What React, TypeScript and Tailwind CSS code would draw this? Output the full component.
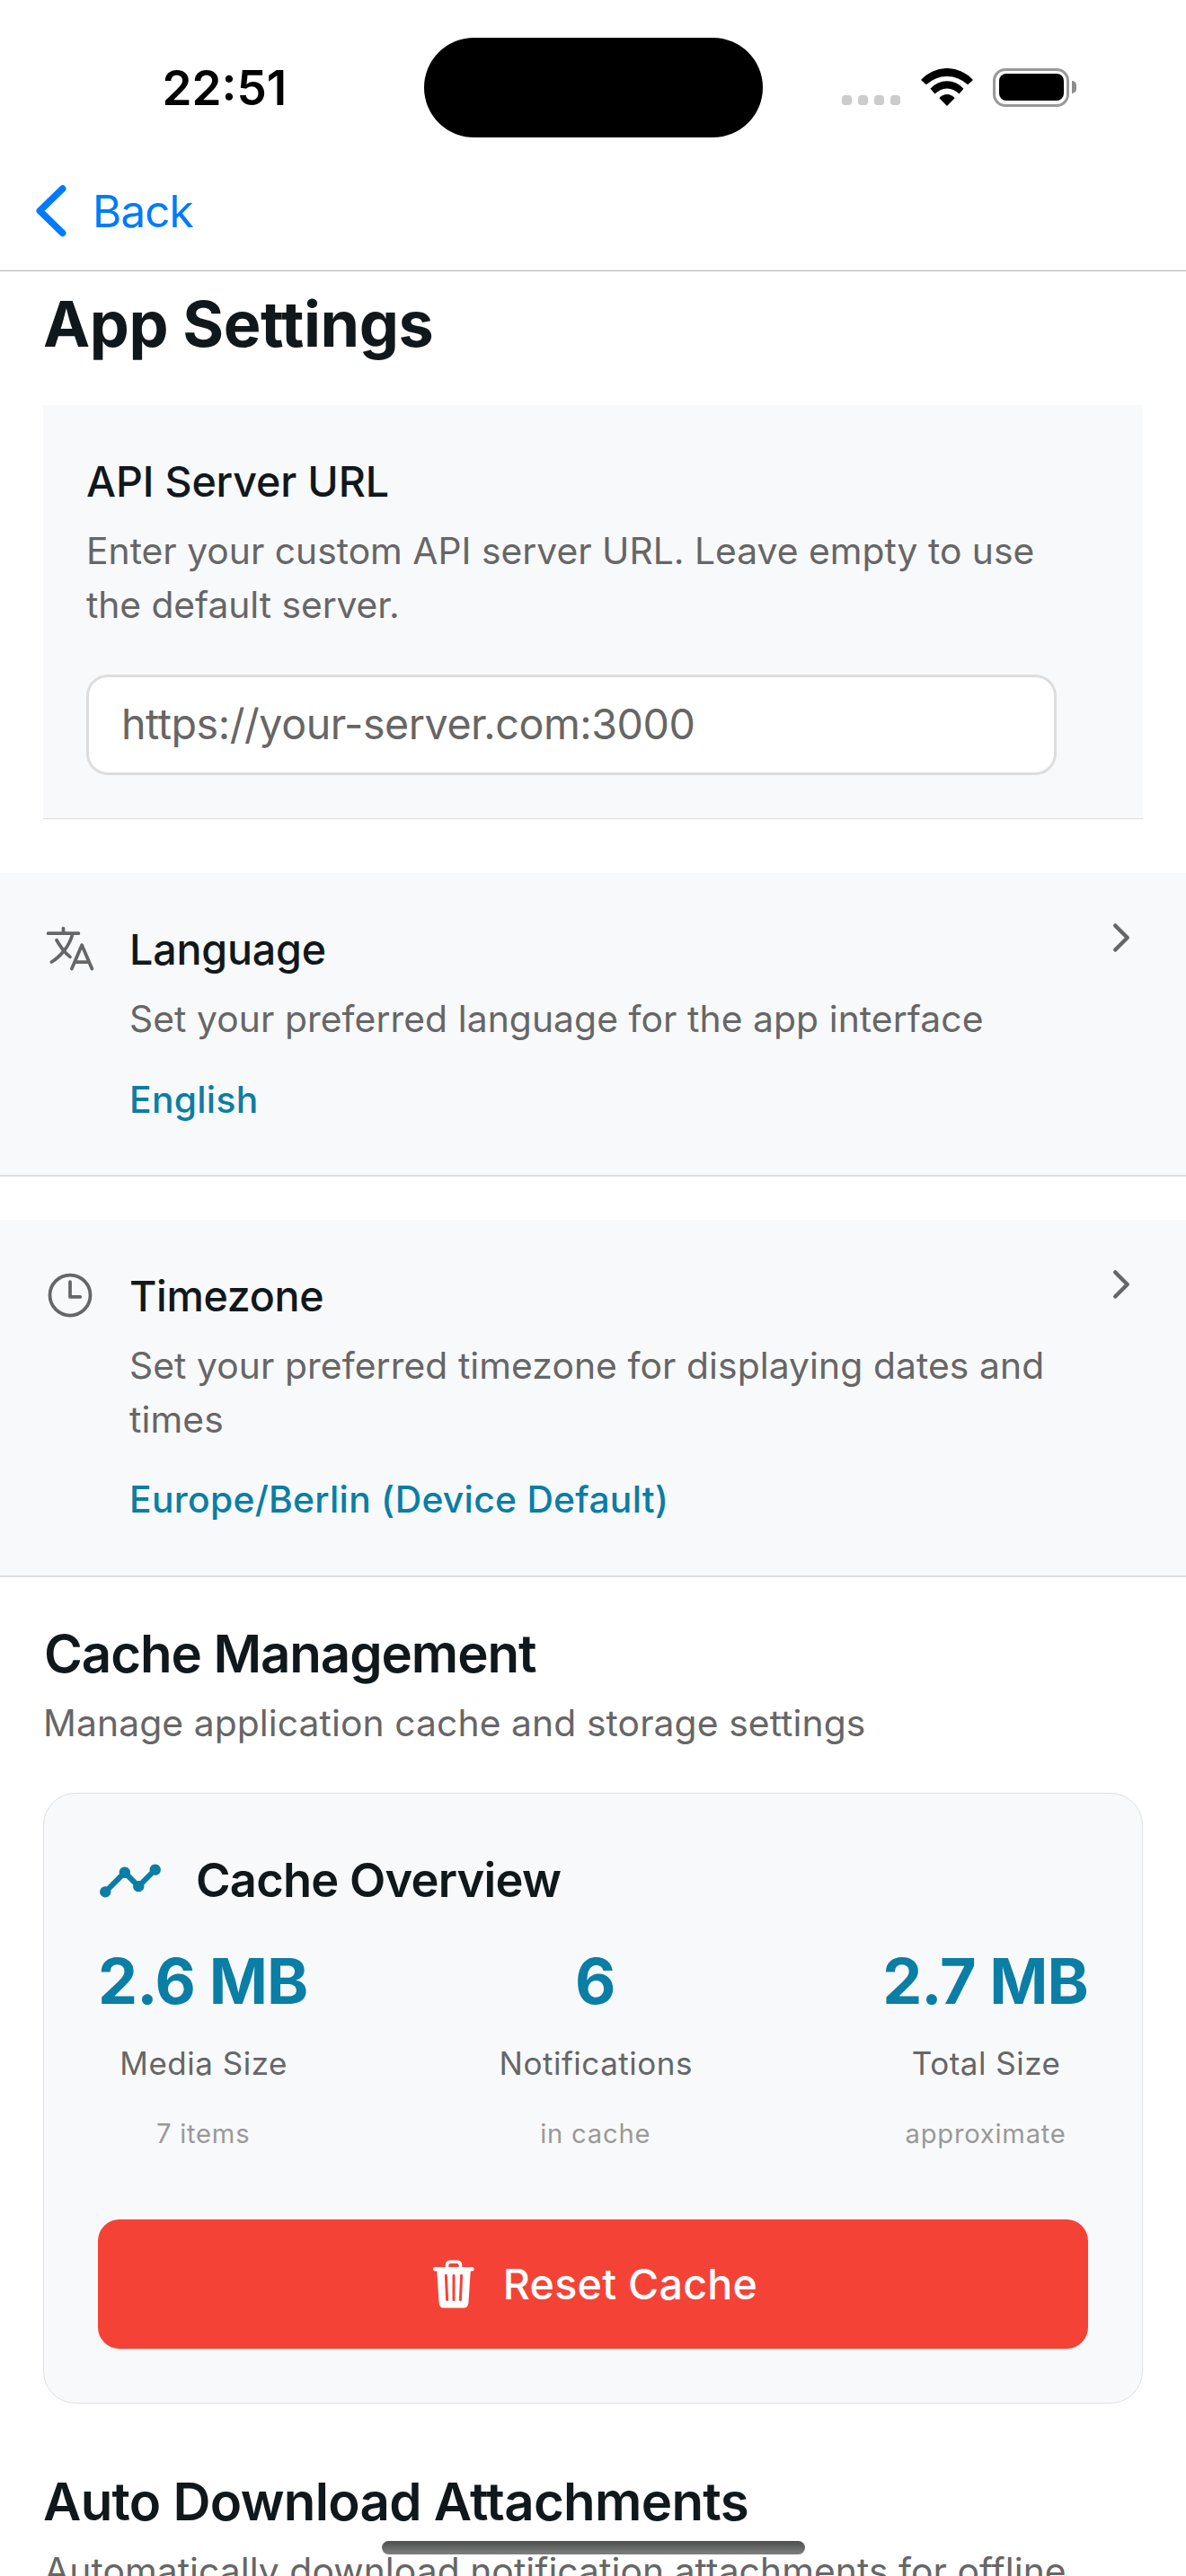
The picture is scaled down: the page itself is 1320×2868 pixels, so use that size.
import React from 'react';
import { IoChevronForward, IoLanguageOutline, IoTimeOutline } from 'react-icons/io5';
import { MdTimeline } from 'react-icons/md';

function WifiIcon() {
  return (
    <svg width="58" height="42" viewBox="0 0 58 42" fill="#000">
      <path d="M0 13A38.8 38.8 0 0 1 58 13L52.1 18.3A33.3 33.3 0 0 0 5.9 18.3Z" />
      <path d="M10.5 22.7A24.6 24.6 0 0 1 47.5 22.7L42.5 28.6A18.2 18.2 0 0 0 15.5 28.6Z" />
      <path d="M20.4 33.3A10.8 10.8 0 0 1 37.6 33.3L29 42Z" />
    </svg>
  );
}

function BatteryIcon() {
  return (
    <div className="flex items-center gap-[3px]">
      <div className="h-[43px] w-[85px] rounded-[14px] border-[3.5px] border-[#999999] p-[3.5px]">
        <div className="h-full w-full rounded-[8px] bg-black" />
      </div>
      <div className="h-[14px] w-[5px] rounded-r-full bg-[#8c8c8c]" />
    </div>
  );
}

function StatusBar() {
  return (
    <div className="flex h-[194px] w-full shrink-0 items-center">
      <div className="ml-[180.5px] w-[291px] pt-[3px] text-[53px] leading-none font-semibold text-black">22:51</div>
      <div className="h-[111px] w-[377px] shrink-0 rounded-full bg-black" />
      <div className="ml-[88.5px] flex items-center">
        <div className="mt-[28px] flex gap-[7px]">
          <span className="h-[11px] w-[11px] rounded-[3.5px] bg-[#cccccc]" />
          <span className="h-[11px] w-[11px] rounded-[3.5px] bg-[#cccccc]" />
          <span className="h-[11px] w-[11px] rounded-[3.5px] bg-[#cccccc]" />
          <span className="h-[11px] w-[11px] rounded-[3.5px] bg-[#cccccc]" />
        </div>
        <div className="ml-[23px]">
          <WifiIcon />
        </div>
        <div className="ml-[22px]">
          <BatteryIcon />
        </div>
      </div>
    </div>
  );
}

function NavBar() {
  return (
    <div className="flex h-[108px] shrink-0 items-start border-b border-[#b2b2b2] pl-[40px]">
      <svg width="34" height="58" viewBox="0 0 34 58" className="mt-[12px]" fill="none" stroke="#007aff" strokeWidth="7.5" strokeLinecap="round" strokeLinejoin="round">
        <path d="M29.7 4L4.3 28.8L29.7 53.5" />
      </svg>
      <span className="ml-[29px] mt-[11px] text-[49.5px] leading-[60px] tracking-[-0.99px] text-[#007aff]">Back</span>
    </div>
  );
}

type RowProps = {
  icon: React.ReactNode;
  title: string;
  titleClass: string;
  lines: { text: string; className: string }[];
  value: string;
  className: string;
};

function SettingsRow({ icon, title, titleClass, lines, value, className }: RowProps) {
  return (
    <section className={`flex items-start border-b-2 border-[#dfe0e0] bg-[#f8f9fb] px-[48px] ${className}`}>
      <div className="mt-[54px] w-[96px] shrink-0 text-[#666666]">{icon}</div>
      <div className="flex-1 pt-[49px]">
        <h3 className={`text-[46.6px] leading-[72px] font-[550] text-[#11181c] ${titleClass}`}>{title}</h3>
        <div className="mt-[12px] text-[40.8px] leading-[59.5px] whitespace-nowrap text-[#666666]">
          {lines.map((l) => (
            <p key={l.text} className={l.className}>{l.text}</p>
          ))}
        </div>
        <p className="mt-[29px] text-[40.8px] leading-[60px] font-medium tracking-[0.28px] text-[#0a7ea4]">{value}</p>
      </div>
      <IoChevronForward size={48} className="mt-[48px] shrink-0 text-[#666666]" />
    </section>
  );
}

type StatProps = { value: string; label: string; note: string };

function Stat({ value, label, note }: StatProps) {
  return (
    <div className="flex flex-col items-center">
      <div className="text-[70px] leading-[90px] font-bold tracking-[-0.95px] text-[#0a7ea4]">{value}</div>
      <div className="mt-[19px] pl-[2px] text-[35px] leading-[54px] tracking-[0.5px] text-[#666666]">{label}</div>
      <div className="mt-[31px] pl-px text-[29.2px] leading-[42px] tracking-[0.77px] text-[#999999]">{note}</div>
    </div>
  );
}

function TrashIcon() {
  return (
    <svg width="46" height="54" viewBox="0 0 46 54">
      <rect x="0" y="8" width="45.6" height="4.4" rx="2.2" fill="#fff" />
      <path d="M15.5 9V6Q15.5 2.3 19.3 2.3H26.7Q30.5 2.3 30.5 6V9" fill="none" stroke="#fff" strokeWidth="3.6" />
      <path d="M4.2 11L6.6 48Q7 53.5 12.2 53.5H33.8Q39 53.5 39.4 48L41.8 11Z" fill="#fff" />
      <path d="M14.4 17.5L15.6 44.5M23 17.5V44.5M31.6 17.5L30.4 44.5" fill="none" stroke="#f44336" strokeWidth="3" strokeLinecap="round" />
    </svg>
  );
}

export default function App() {
  return (
    <div className="relative flex h-[2868px] w-[1320px] flex-col overflow-hidden bg-white font-[Inter,sans-serif] whitespace-nowrap">
      <StatusBar />
      <NavBar />

      <h1 className="mt-[14px] ml-[48px] text-[70px] leading-[90px] font-bold tracking-[-0.43px] text-[#11181c]">App Settings</h1>

      <section className="mx-[48px] mt-[45px] h-[461px] shrink-0 border-b border-[#dddddd] bg-[#f8f9fb] pt-[49px] pr-[96px] pl-[48px]">
        <h3 className="text-[46.6px] leading-[72px] font-[550] tracking-[-0.15px] text-[#11181c]">API Server URL</h3>
        <div className="mt-[12px] text-[40.8px] leading-[59.5px] text-[#666666]">
          <p>Enter your custom API server URL. Leave empty to use</p>
          <p className="tracking-[-0.07px]">the default server.</p>
        </div>
        <div className="mt-[48px] flex h-[112px] items-center rounded-[24px] border-[3px] border-[#dddddd] bg-white pl-[36px] text-[46.6px] tracking-[-0.46px] text-[#666666]">
          https://your-server.com:3000
        </div>
      </section>

      <SettingsRow
        className="mt-[60px] h-[338px] shrink-0"
        icon={<IoLanguageOutline size={60} />}
        title="Language"
        titleClass="tracking-[-0.2px]"
        lines={[{ text: 'Set your preferred language for the app interface', className: 'tracking-[0.07px]' }]}
        value="English"
      />
      <SettingsRow
        className="mt-[48px] h-[398px] shrink-0"
        icon={<IoTimeOutline size={60} />}
        title="Timezone"
        titleClass="tracking-[-0.35px]"
        lines={[
          { text: 'Set your preferred timezone for displaying dates and', className: 'tracking-[0.08px]' },
          { text: 'times', className: 'tracking-[0.12px]' },
        ]}
        value="Europe/Berlin (Device Default)"
      />

      <h2 className="mt-[43px] ml-[49px] text-[58.2px] leading-[84px] font-semibold tracking-[-1.08px] text-[#11181c]">Cache Management</h2>
      <p className="mt-[5px] ml-[48px] text-[40.8px] leading-[60px] tracking-[0.09px] text-[#666666]">Manage application cache and storage settings</p>

      <section className="mx-[48px] mt-[48px] h-[680px] shrink-0 rounded-[36px] border border-[#dddfe1] bg-[#f8f9fb] px-[60px] pt-[59px]">
        <div className="flex h-[75px] items-center">
          <MdTimeline size={74} className="-ml-px text-[#0a7ea4]" />
          <h3 className="ml-[36px] text-[52.4px] leading-[75px] font-semibold tracking-[-0.75px] text-[#11181c]">Cache Overview</h3>
        </div>
        <div className="mt-[30px] flex justify-between">
          <Stat value="2.6 MB" label="Media Size" note="7 items" />
          <Stat value="6" label="Notifications" note="in cache" />
          <Stat value="2.7 MB" label="Total Size" note="approximate" />
        </div>
        <button className="mt-[74px] flex h-[144px] w-full items-center justify-center rounded-[24px] bg-[#f44336] pl-[5px] text-white">
          <TrashIcon />
          <span className="ml-[32px] text-[46.6px] leading-[60px] font-[550] tracking-[0.26px]">Reset Cache</span>
        </button>
      </section>

      <h2 className="mt-[67px] ml-[48px] shrink-0 text-[58.2px] leading-[84px] font-semibold tracking-[-0.7px] text-[#11181c]">Auto Download Attachments</h2>
      <p className="mt-[5px] ml-[49px] shrink-0 text-[40.8px] leading-[60px] tracking-[0.06px] text-[#666666]">Automatically download notification attachments for offline</p>

      <div className="absolute top-[2829px] left-[425px] h-[15px] w-[471px] rounded-full bg-linear-to-b from-[#4d4f4e] to-[#808080]" />
    </div>
  );
}
